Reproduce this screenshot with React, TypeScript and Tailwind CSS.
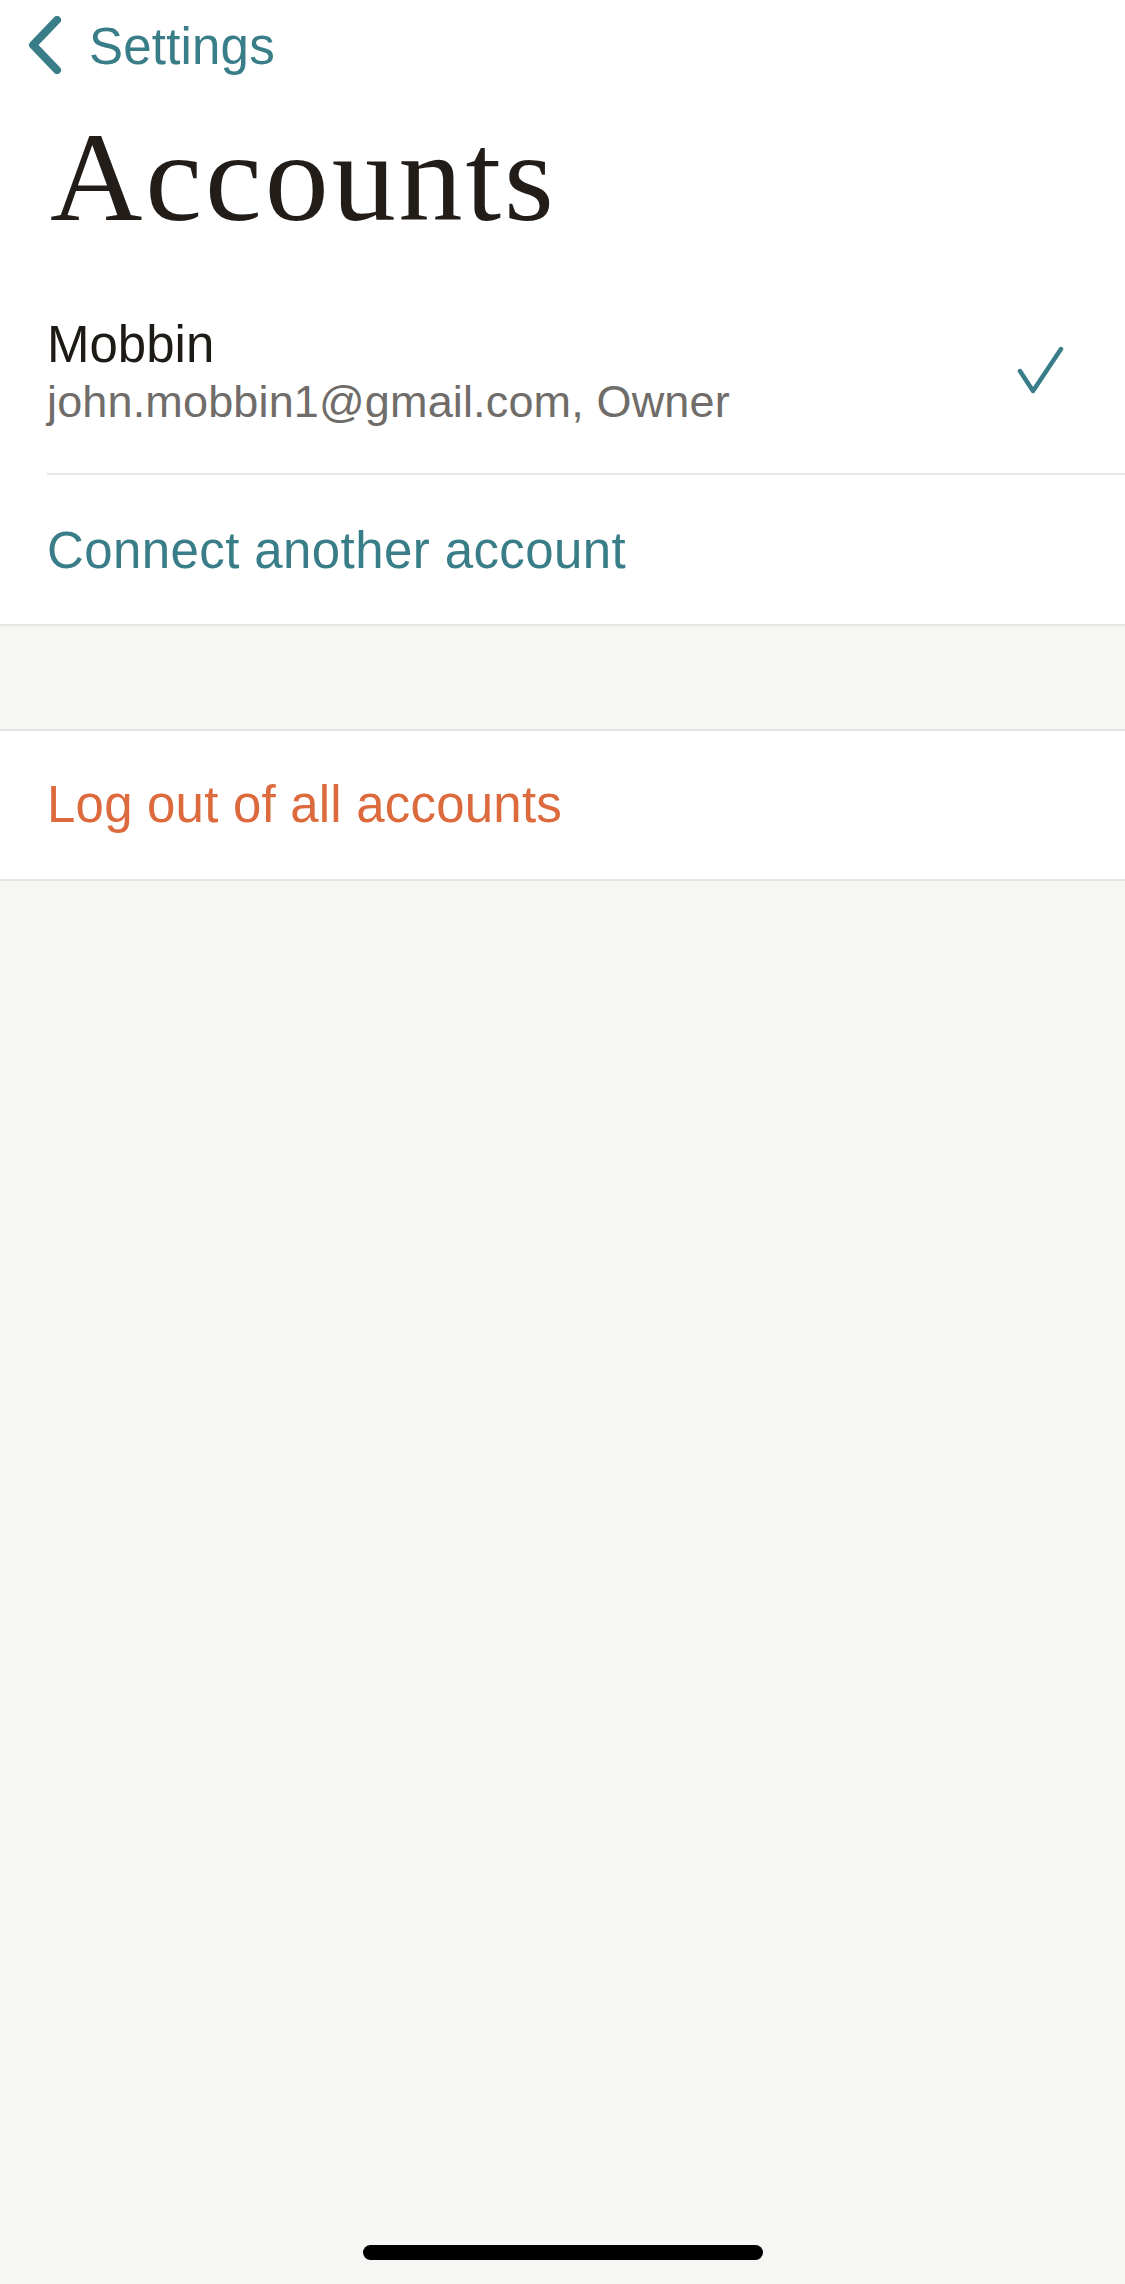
import React from "react";

const sans = {fontFamily: '"Liberation Sans", Arial, sans-serif'};

function BackChevron() {
    return (
        <svg width="34" height="58" viewBox="0 0 34 58" fill="none" aria-hidden>
            <path d="M29 4 L5 29 L29 54" stroke="#387d88" strokeWidth="8" strokeLinecap="round" strokeLinejoin="round"/>
        </svg>
    );
}

function Check() {
    return (
        <svg width="48" height="52" viewBox="0 0 48 52" fill="none" aria-hidden>
            <path d="M3 25 L16 45 L44 3" stroke="#387d88" strokeWidth="4.5" strokeLinecap="round" strokeLinejoin="round"/>
        </svg>
    );
}

export default function App() {
    return (
        <div className="relative flex min-h-[2284px] w-full flex-col bg-[#f6f6f4]" style={sans}>
            <section className="bg-white">
                <div className="flex h-[90px] items-center gap-[27px] pl-[28px]">
                    <BackChevron/>
                    <span className="pt-[3px] text-[51px] leading-[60px] tracking-[0.2px] text-[#387d88]">Settings</span>
                </div>

                <h1 className="mt-[23px] pl-[50px] font-['Liberation_Serif'] text-[128px] font-normal leading-[128px] tracking-[2.9px] text-[#221d18]">
                    Accounts
                </h1>

                <div className="ml-[47px] mt-[74px] flex items-center justify-between border-b-2 border-[#e6e6e4] pb-[44px] pr-[60px]">
                    <div className="flex flex-col">
                        <span className="text-[51px] leading-[60px] text-[#1e1a16]">Mobbin</span>
                        <span className="text-[45px] leading-[54px] tracking-[0.15px] text-[#6f6c69]">john.mobbin1@gmail.com, Owner</span>
                    </div>
                    <Check/>
                </div>

                <button type="button" className="flex h-[151px] w-full items-center border-b-2 border-[#e6e6e4] pl-[47px] text-left">
                    <span className="pt-[2px] text-[51px] leading-[60px] tracking-[0.4px] text-[#387d88]">Connect another account</span>
                </button>
            </section>

            <div className="h-[103px]"/>

            <button type="button" className="flex h-[152px] w-full items-center border-y-2 border-[#e6e6e4] bg-white pl-[47px] text-left">
                <span className="text-[51px] leading-[60px] tracking-[0.2px] text-[#dc6a3c]">Log out of all accounts</span>
            </button>

            <div className="absolute bottom-[24px] left-1/2 h-[15px] w-[400px] -translate-x-1/2 rounded-full bg-black"/>
        </div>
    );
}
